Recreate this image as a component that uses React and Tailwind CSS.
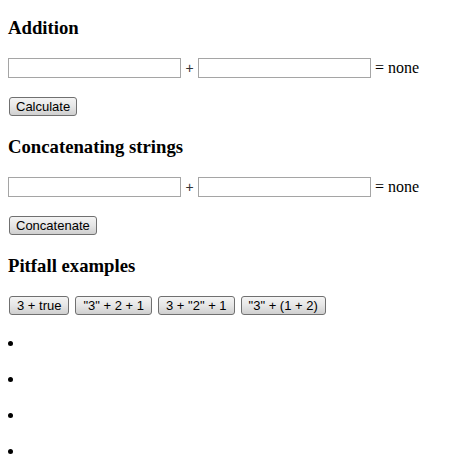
const btn =
  "h-[19px] border border-[#707070] rounded-[3px] bg-gradient-to-b from-[#f4f4f4] via-[#e6e6e6] to-[#cfcfcf] text-[13px] leading-none text-black font-['Liberation_Sans',Arial,sans-serif]"

const input = 'w-[173px] h-[20px] border border-[#a5a5a5] bg-white align-middle'

function Sum({ label }) {
  return (
    <>
      <div className="mt-[20px] h-[20px] flex items-center text-[16px]">
        <input className={input} />
        <span className="w-[17px] text-center font-['Liberation_Sans',Arial,sans-serif] text-[14px] text-[#333]">+</span>
        <input className={input} />
        <span className="ml-[4px]">= none</span>
      </div>
      <div className="mt-[19px] ml-[1px] flex">
        <button className={`${btn} px-[6px]`}>{label}</button>
      </div>
    </>
  )
}

export default function App() {
  const pitfalls = ['3 + true', '"3" + 2 + 1', '3 + "2" + 1', '"3" + (1 + 2)']

  return (
    <div className="px-[8px] pt-[17px] font-['Liberation_Serif','Times_New_Roman',serif] text-black bg-white min-h-[473px]">
      <h3 className="text-[18.72px] font-bold leading-[21px]">Addition</h3>
      <Sum label="Calculate" />

      <h3 className="mt-[20px] text-[18.72px] font-bold leading-[21px]">Concatenating strings</h3>
      <Sum label="Concatenate" />

      <h3 className="mt-[20px] text-[18.72px] font-bold leading-[21px]">Pitfall examples</h3>
      <div className="mt-[20px] ml-[1px] flex gap-[6px]">
        {pitfalls.map((p) => (
          <button key={p} className={`${btn} px-[7px]`}>{p}</button>
        ))}
      </div>

      <ul className="mt-[19px] list-disc list-inside text-[16px]">
        {[0, 1, 2, 3].map((i) => (
          <li key={i} className="h-[36px] leading-[18px]"></li>
        ))}
      </ul>
    </div>
  )
}
